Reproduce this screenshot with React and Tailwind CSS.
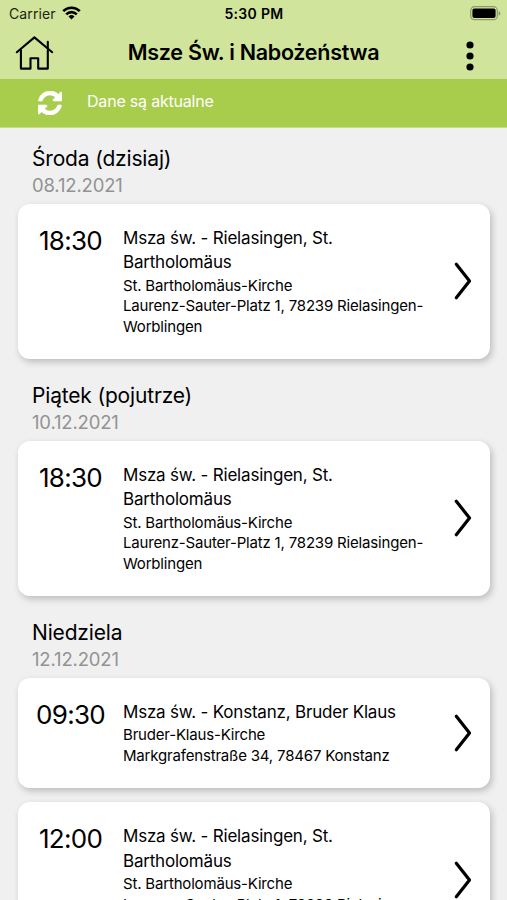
const RIELASINGEN = {
  title: ['Msza św. - Rielasingen, St.', 'Bartholomäus'],
  details: ['St. Bartholomäus-Kirche', 'Laurenz-Sauter-Platz 1, 78239 Rielasingen-', 'Worblingen'],
};

const DAYS = [
  { day: 'Środa (dzisiaj)', date: '08.12.2021', masses: [{ time: '18:30', ...RIELASINGEN }] },
  { day: 'Piątek (pojutrze)', date: '10.12.2021', masses: [{ time: '18:30', ...RIELASINGEN }] },
  {
    day: 'Niedziela',
    date: '12.12.2021',
    masses: [
      {
        time: '09:30',
        title: ['Msza św. - Konstanz, Bruder Klaus'],
        details: ['Bruder-Klaus-Kirche', 'Markgrafenstraße 34, 78467 Konstanz'],
      },
      { time: '12:00', ...RIELASINGEN },
    ],
  },
];

function StatusBar() {
  return (
    <div className="grid h-[27px] grid-cols-3 items-center pl-[9px] pr-[6px] text-[14px]">
      <div className="flex items-center gap-[6px]">
        <span className="text-[14px] tracking-[0.1px] text-[#1c2410]">Carrier</span>
        <svg className="-mt-px h-[14px] w-[19px]" viewBox="0 0 19 14" fill="none" stroke="#000" strokeWidth="2.6">
          <path d="M1.2 5.1a11.8 11.8 0 0 1 16.6 0" />
          <path d="M4.2 8.3a7.5 7.5 0 0 1 10.6 0" />
          <path d="M9.5 13.4 6.5 10.4a4.3 4.3 0 0 1 6 0z" fill="#000" stroke="none" />
        </svg>
      </div>
      <span className="-ml-[2px] text-center text-[14px] font-semibold tracking-[0.3px] whitespace-nowrap">5:30 PM</span>
      <svg className="h-[15px] w-[31px] justify-self-end" viewBox="0 0 31 15">
        <rect x="0.7" y="0.7" width="26.6" height="13" rx="3.8" fill="none" stroke="#8c9a6c" strokeWidth="1.2" />
        <rect x="2.4" y="2.5" width="23.2" height="9.4" rx="2" fill="#000" />
        <path d="M28.6 4.9c2.4.8 2.4 3.8 0 4.6z" fill="#8c9a6c" />
      </svg>
    </div>
  );
}

function AppBar() {
  return (
    <div className="flex h-[52px] items-center justify-between pl-[15px] pr-[33px]">
      <svg className="h-[36px] w-[39px]" viewBox="0 0 39 36" fill="none" stroke="#000" strokeWidth="2.1" strokeLinecap="round" strokeLinejoin="round">
        <path d="M1.8 17.2 19.4 2.4 37.2 17.2" />
        <path d="M5.900 15V33.600h9.600V23.200h7.700v10.400h9.600V15" />
        <path d="M32.800 13V6.800" />
      </svg>
      <h1 className="-ml-[13px] -mt-px text-[21.5px] font-semibold tracking-[-0.27px] whitespace-nowrap">Msze Św. i Nabożeństwa</h1>
      <svg className="mt-[5px] h-[30px] w-[8px]" viewBox="0 0 8 30">
        <circle cx="4" cy="4" r="3.6" />
        <circle cx="4" cy="15" r="3.6" />
        <circle cx="4" cy="26" r="3.6" />
      </svg>
    </div>
  );
}

function SyncBanner() {
  return (
    <div className="flex h-[49px] items-center gap-[25px] border-b border-[#c5db8b] bg-[#a8cc4c] pl-[38px] pb-[3px] text-white">
      <svg className="mt-[3px] h-[24px] w-[24px]" viewBox="0 0 1536 1536" fill="currentColor" stroke="currentColor" strokeWidth="40">
        <path d="M1511 928q0 5-1 7-64 268-268 434.500T764 1536q-146 0-282.500-55T238 1324l-129 129q-19 19-45 19t-45-19-19-45V960q0-26 19-45t45-19h448q26 0 45 19t19 45-19 45l-137 137q71 66 161 102t187 36q134 0 250-65t186-179q11-17 53-117 8-23 30-23h192q13 0 22.500 9.500t9.500 22.500zm25-800v448q0 26-19 45t-45 19h-448q-26 0-45-19t-19-45 19-45l138-138Q969 256 768 256q-134 0-250 65T332 500q-11 17-53 117-8 23-30 23H50q-13 0-22.500-9.500T18 608v-7q65-268 270-434.500T768 0q146 0 284 55.500T1297 212l130-129q19-19 45-19t45 19 19 45z" />
      </svg>
      <span className="-mt-px text-[16px] tracking-[-0.2px]">Dane są aktualne</span>
    </div>
  );
}

function MassCard({ time, title, details }) {
  return (
    <article className="flex rounded-[12px] bg-white py-[22px] pr-[18px] shadow-[2px_3px_7px_rgba(0,0,0,0.22)]">
      <time className="w-[105px] shrink-0 text-center text-[26px] leading-[30px] tracking-[-0.7px]">{time}</time>
      <div className="min-w-0 flex-1">
        {title.map((line) => (
          <p key={line} className="text-[17px] leading-[24.3px] tracking-[-0.2px] whitespace-nowrap">{line}</p>
        ))}
        <div className="-mb-[1px] pt-[1px]">
          {details.map((line) => (
            <p key={line} className="text-[15px] leading-[20.8px] tracking-[-0.18px] whitespace-nowrap">{line}</p>
          ))}
        </div>
      </div>
      <svg className="h-[40px] w-[18px] self-center" viewBox="0 0 18 40" fill="none" stroke="#000" strokeWidth="3.2" strokeLinecap="round" strokeLinejoin="round">
        <path d="M2.3 3.200 15.5 20 2.3 36.800" />
      </svg>
    </article>
  );
}

export default function App() {
  return (
    <div className="flex h-[900px] w-full flex-col overflow-hidden bg-[#f0f0f0] font-['Inter','Liberation_Sans',sans-serif] text-black">
      <header className="shrink-0 bg-[#d0e59b]">
        <StatusBar />
        <AppBar />
        <SyncBanner />
      </header>
      <main className="flex flex-col pl-[18px] pr-[17px]">
        {DAYS.map(({ day, date, masses }) => (
          <section key={date} className="mb-[6px]">
            <div className="h-[76px] pl-[14px] pt-[17px]">
              <h2 className="text-[21px] leading-[28px] tracking-[-0.17px]">{day}</h2>
              <p className="-mt-px text-[18.5px] leading-[26px] tracking-[-0.17px] text-[#939393]">{date}</p>
            </div>
            <div className="flex flex-col gap-[14.5px]">
              {masses.map((mass) => (
                <MassCard key={mass.time} {...mass} />
              ))}
            </div>
          </section>
        ))}
      </main>
    </div>
  );
}
